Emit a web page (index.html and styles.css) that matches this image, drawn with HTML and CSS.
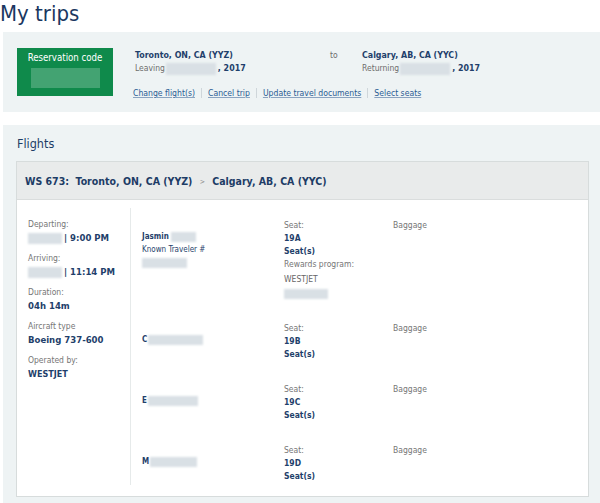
FILE: index.html
```html
<!DOCTYPE html>
<html>
<head>
<meta charset="utf-8">
<link rel="stylesheet" href="styles.css">
</head>
<body>
<h1 class="title">My trips</h1>
<section class="res-panel">
  <div class="res-code">
    <div class="res-label">Reservation code</div>
    <div class="res-blur"></div>
  </div>
  <div class="res-info">
    <div class="route">
      <div class="leg">
        <div class="city">Toronto, ON, CA (YYZ)</div>
        <div class="date">Leaving <span class="blur b-date"></span><b>, 2017</b></div>
      </div>
      <div class="to">to</div>
      <div class="leg">
        <div class="city">Calgary, AB, CA (YYC)</div>
        <div class="date">Returning <span class="blur b-date"></span><b>, 2017</b></div>
      </div>
    </div>
    <div class="links">
      <a class="link" href="#">Change flight(s)</a><span class="sep"></span>
      <a class="link" href="#">Cancel trip</a><span class="sep"></span>
      <a class="link" href="#">Update travel documents</a><span class="sep"></span>
      <a class="link" href="#">Select seats</a>
    </div>
  </div>
</section>
<section class="flights-panel">
  <h2 class="flights-title">Flights</h2>
  <div class="card">
    <div class="card-head">WS 673:&nbsp; Toronto, ON, CA (YYZ) <span class="arrow">&gt;</span> Calgary, AB, CA (YYC)</div>
    <div class="card-body">
      <div class="details">
        <div class="group"><div class="lbl">Departing:</div><div class="val"><span class="blur b-day"></span>| 9:00 PM</div></div>
        <div class="group"><div class="lbl">Arriving:</div><div class="val"><span class="blur b-day"></span>| 11:14 PM</div></div>
        <div class="group"><div class="lbl">Duration:</div><div class="val">04h 14m</div></div>
        <div class="group"><div class="lbl">Aircraft type</div><div class="val">Boeing 737-600</div></div>
        <div class="group"><div class="lbl">Operated by:</div><div class="val small">WESTJET</div></div>
      </div>
      <div class="pax-list">
        <div class="pax">
          <div class="name">
            <div class="nm">Jasmin <span class="blur b-last1"></span></div>
            <div class="ktn">Known Traveler #</div>
            <div class="blur-line"><span class="blur b-ktn"></span></div>
          </div>
          <div class="seat">
            <div class="lbl">Seat:</div>
            <div class="sv">19A</div>
            <div class="sv">Seat(s)</div>
            <div class="lbl">Rewards program:</div>
            <div class="rw">WESTJET</div>
            <div class="blur-line"><span class="blur b-rw"></span></div>
          </div>
          <div class="bag lbl">Baggage</div>
        </div>
        <div class="pax">
          <div class="name"><div class="nm">C<span class="blur b-n"></span></div></div>
          <div class="seat">
            <div class="lbl">Seat:</div>
            <div class="sv">19B</div>
            <div class="sv">Seat(s)</div>
          </div>
          <div class="bag lbl">Baggage</div>
        </div>
        <div class="pax">
          <div class="name"><div class="nm">E<span class="blur b-n2"></span></div></div>
          <div class="seat">
            <div class="lbl">Seat:</div>
            <div class="sv">19C</div>
            <div class="sv">Seat(s)</div>
          </div>
          <div class="bag lbl">Baggage</div>
        </div>
        <div class="pax">
          <div class="name"><div class="nm">M<span class="blur b-n3"></span></div></div>
          <div class="seat">
            <div class="lbl">Seat:</div>
            <div class="sv">19D</div>
            <div class="sv">Seat(s)</div>
          </div>
          <div class="bag lbl">Baggage</div>
        </div>
      </div>
    </div>
  </div>
</section>
</body>
</html>
```
FILE: styles.css
```css
* { box-sizing: border-box; }
html, body { margin: 0; padding: 0; background: #ffffff; }
body {
  font-family: "DejaVu Sans Condensed", "DejaVu Sans", sans-serif;
  font-stretch: condensed;
  color: #1f3f6b;
  font-size: 8.5px;
  overflow: hidden;
}
.title {
  margin: 0 0 4px 0;
  font-size: 22px;
  line-height: 28px;
  font-weight: normal;
  color: #1a3761;
}
.res-panel {
  margin-left: 3px;
  height: 80px;
  background: #eef3f4;
  display: flex;
  padding: 16px 0 0 14px;
}
.res-code {
  width: 96px;
  height: 48px;
  background: #0f8a4b;
  padding-top: 4px;
  display: flex;
  flex-direction: column;
  align-items: center;
}
.res-label {
  color: #ffffff;
  font-size: 9.6px;
  line-height: 12px;
}
.res-blur {
  width: 69px;
  height: 20px;
  margin-top: 4px;
  background: rgba(255, 255, 255, 0.22);
  filter: blur(0.6px);
}
.res-info {
  margin-left: 22px;
  padding-top: 1px;
}
.route { display: flex; }
.leg { width: 195px; }
.leg + .to + .leg { width: auto; }
.to {
  width: 32px;
  color: #6d6d6d;
  line-height: 13px;
}
.city {
  font-weight: bold;
  font-size: 8.8px;
  line-height: 13px;
}
.date {
  color: #6d6d6d;
  line-height: 13px;
  display: flex;
  align-items: center;
}
.date b { color: #1f3f6b; margin-left: 2px; font-size: 8.8px; }
.blur {
  display: inline-block;
  background: #d9e0e5;
  filter: blur(0.8px);
  vertical-align: middle;
}
.b-date { width: 50px; height: 12px; margin-left: 1px; }
.links {
  margin-top: 12px;
  margin-left: -2px;
  display: flex;
  align-items: center;
  line-height: 12px;
}
.link {
  color: #2a5c93;
  font-size: 8.6px;
  text-decoration: underline;
  text-decoration-color: #8aa3c0;
}
.sep {
  display: inline-block;
  width: 1px;
  height: 10px;
  background: #cfd6da;
  margin: 0 6px;
}
.flights-panel {
  margin-top: 13px;
  margin-left: 3px;
  background: #eef3f4;
  padding: 10px 11px 6px 13px;
}
.flights-title {
  margin: 0 0 8px 1px;
  font-size: 12.5px;
  line-height: 18px;
  font-weight: normal;
  color: #1d3c66;
}
.card {
  border: 1px solid #d7dcdc;
  background: #ffffff;
  height: 336px;
}
.card-head {
  height: 38px;
  background: #e9ebeb;
  border-bottom: 1px solid #dadddd;
  padding-left: 8px;
  font-weight: bold;
  font-size: 10.5px;
  line-height: 38px;
  color: #1d3c66;
}
.arrow {
  font-weight: normal;
  color: #8a8a8a;
  font-size: 7px;
  margin: 0 4px;
  vertical-align: 1px;
}
.card-body { display: flex; }
.details {
  width: 114px;
  margin: 8px 0 11px 0;
  padding: 10px 0 0 11px;
  border-right: 1px solid #e6eaea;
  height: 277px;
}
.group { margin-bottom: 7px; }
.lbl {
  color: #767676;
  line-height: 13px;
}
.val {
  font-weight: bold;
  font-size: 9.5px;
  line-height: 14px;
  display: flex;
  align-items: center;
}
.val.small { font-size: 9px; }
.b-day { width: 34px; height: 11px; margin-right: 2px; }
.pax-list {
  padding: 19px 0 0 11px;
  flex: 1;
}
.pax {
  display: flex;
  margin-bottom: 22px;
}
.name {
  width: 142px;
  margin-top: 11px;
}
.nm {
  font-weight: bold;
  font-size: 8px;
  line-height: 13px;
  display: flex;
  align-items: center;
}
.b-last1 { width: 25px; height: 10px; margin-left: 2px; }
.b-n { width: 55px; height: 10px; margin-left: 1px; }
.b-n2 { width: 50px; height: 10px; margin-left: 1px; }
.b-n3 { width: 47px; height: 10px; margin-left: 1px; }
.ktn { line-height: 13px; font-size: 8px; }
.blur-line { height: 13px; display: flex; align-items: center; }
.b-ktn { width: 45px; height: 10px; }
.seat { width: 109px; }
.sv {
  font-weight: bold;
  line-height: 13px;
}
.rw {
  color: #666666;
  line-height: 15px;
  margin-top: 1px;
}
.b-rw { width: 44px; height: 10px; }
.bag { flex: 1; }
```
